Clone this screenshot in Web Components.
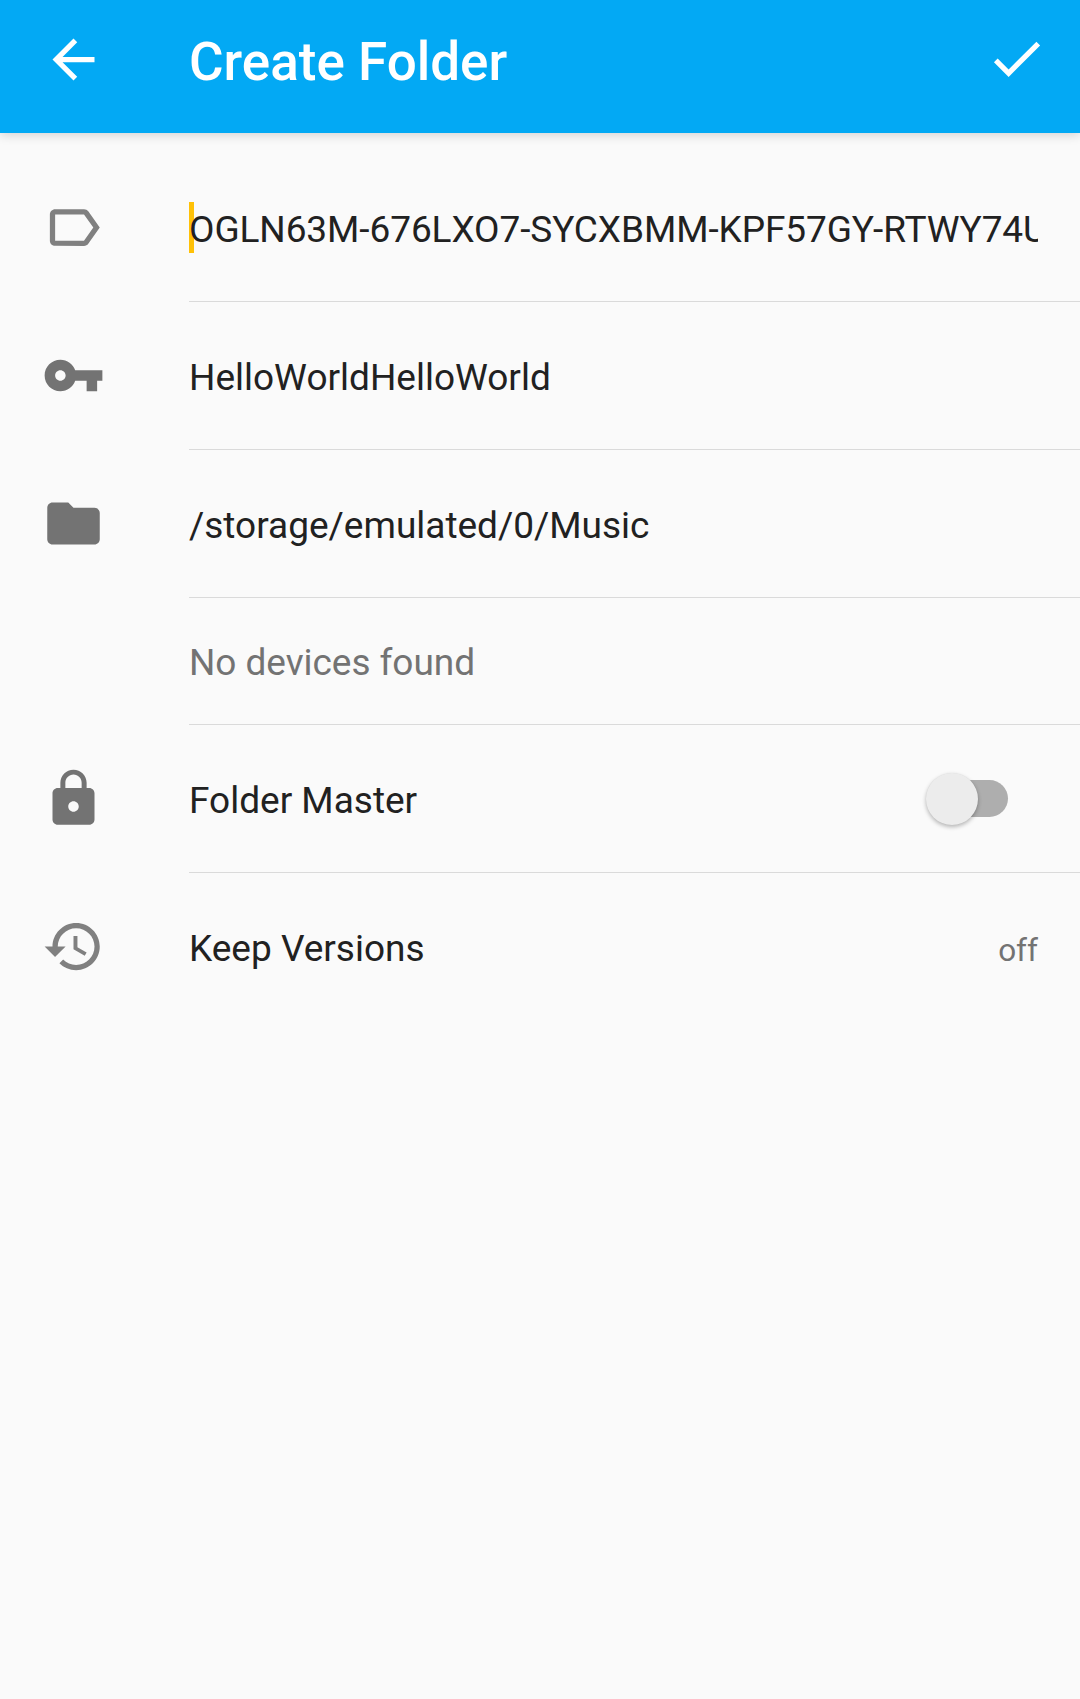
<!DOCTYPE html>
<html lang="en">
<head>
<meta charset="utf-8">
<title>Create Folder</title>
<style>
html, body { margin: 0; background: #fafafa; }
body { font-family: Roboto, sans-serif; color: #212121; }
</style>
</head>
<body>
<folder-screen></folder-screen>
<script>
const ICONS = {
  back: 'M20 11H7.83l5.59-5.59L12 4l-8 8 8 8 1.41-1.41L7.83 13H20v-2z',
  check: 'M9 16.17L4.83 12l-1.42 1.41L9 19 21 7l-1.41-1.41z',
  label: 'M17.63 5.84C17.27 5.33 16.67 5 16 5L5 5.01C3.9 5.01 3 5.9 3 7v10c0 1.1.9 1.99 2 1.99L16 19c.67 0 1.27-.33 1.63-.84L22 12l-4.37-6.16zM16 17H5V7h11l3.55 5L16 17z',
  key: 'M12.65 10C11.83 7.67 9.61 6 7 6c-3.31 0-6 2.69-6 6s2.69 6 6 6c2.61 0 4.83-1.67 5.65-4H17v4h4v-4h2v-4H12.65zM7 14c-1.1 0-2-.9-2-2s.9-2 2-2 2 .9 2 2-.9 2-2 2z',
  folder: 'M10 4H4c-1.1 0-1.99.9-1.99 2L2 18c0 1.1.9 2 2 2h16c1.1 0 2-.9 2-2V8c0-1.1-.9-2-2-2h-8l-2-2z',
  lock: 'M18 8h-1V6c0-2.76-2.24-5-5-5S7 3.24 7 6v2H6c-1.1 0-2 .9-2 2v10c0 1.1.9 2 2 2h12c1.1 0 2-.9 2-2V10c0-1.1-.9-2-2-2zm-6 9c-1.1 0-2-.9-2-2s.9-2 2-2 2 .9 2 2-.9 2-2 2zm3.1-9H8.9V6c0-1.71 1.39-3.1 3.1-3.1 1.71 0 3.1 1.39 3.1 3.1v2z',
  history: 'M13 3c-4.97 0-9 4.03-9 9H1l3.89 3.89.07.14L9 12H6c0-3.87 3.13-7 7-7s7 3.13 7 7-3.13 7-7 7c-1.93 0-3.68-.79-4.94-2.06l-1.42 1.42C8.27 19.99 10.51 21 13 21c4.97 0 9-4.03 9-9s-4.03-9-9-9zm-1 5v5l4.28 2.54.72-1.21-3.5-2.08V8H12z'
};

customElements.define('md-icon', class extends HTMLElement {
  connectedCallback() {
    this.attachShadow({ mode: 'open' }).innerHTML = `
      <style>:host{display:block;width:63px;height:63px;flex:none} svg{display:block;width:63px;height:63px;fill:currentColor}</style>
      <svg viewBox="0 0 24 24" aria-hidden="true"><path d="${ICONS[this.getAttribute('name')]}"/></svg>`;
  }
});

customElements.define('app-bar', class extends HTMLElement {
  connectedCallback() {
    this.attachShadow({ mode: 'open' }).innerHTML = `
      <style>
        :host{display:flex;box-sizing:border-box;height:133px;padding:0 32px 0 42px;background:#03a9f4;color:#fff;box-shadow:0 2px 10px rgba(0,0,0,.16)}
        md-icon{margin-top:28px}
        .end{margin-top:27px}
        h1{flex:1;margin:31px 0 0 84px;font-size:53px;font-weight:500;line-height:62px;white-space:nowrap}
      </style>
      <md-icon name="back"></md-icon>
      <h1><slot></slot></h1>
      <md-icon class="end" name="check"></md-icon>`;
  }
});

customElements.define('form-row', class extends HTMLElement {
  connectedCallback() {
    const icon = this.getAttribute('icon');
    this.attachShadow({ mode: 'open' }).innerHTML = `
      <style>
        :host{display:flex;height:148px;padding-left:42px}
        :host([short]){height:127px;color:#737373}
        .lead{width:147px;flex:none;padding-top:42px;color:#737373}
        .lead.light{color:#808080}
        .body{flex:1;min-width:0;box-sizing:border-box;display:flex;align-items:center;padding-right:42px;border-bottom:1px solid #dadada}
        :host([last]) .body{border-color:transparent}
        .text{flex:1;min-width:0;margin-top:4px;font-size:37px;line-height:51px;white-space:nowrap;overflow:hidden}
        :host([short]) .text{margin-top:3px;letter-spacing:-.05px}
        .text.focused{height:55px;margin-top:0;padding-top:4px;line-height:51px;letter-spacing:-.08px;background:linear-gradient(#ffc107,#ffc107) 0 2px/5px 51px no-repeat}
      </style>
      <div class="lead ${icon === 'label' || icon === 'history' ? 'light' : ''}">${icon ? `<md-icon name="${icon}"></md-icon>` : ''}</div>
      <div class="body"><div class="text ${this.hasAttribute('focused') ? 'focused' : ''}" style="box-sizing:border-box"><slot></slot></div><slot name="end"></slot></div>`;
  }
});

customElements.define('toggle-switch', class extends HTMLElement {
  connectedCallback() {
    this.attachShadow({ mode: 'open' }).innerHTML = `
      <style>
        :host{display:block;margin-right:30px}
        .track{display:flex;align-items:center;width:76px;height:37px;border-radius:19px;background:#aeaeae}
        .thumb{width:52px;height:52px;margin:1px 0 0 -6px;border-radius:50%;background:#ececec;box-shadow:0 2px 4px rgba(0,0,0,.28),0 0 1px rgba(0,0,0,.08)}
      </style>
      <div class="track"><div class="thumb"></div></div>`;
  }
});

customElements.define('value-label', class extends HTMLElement {
  connectedCallback() {
    this.attachShadow({ mode: 'open' }).innerHTML = `
      <style>:host{display:block;margin-top:8px;font-size:31.5px;line-height:37px;color:#737373}</style><slot></slot>`;
  }
});

customElements.define('folder-screen', class extends HTMLElement {
  connectedCallback() {
    this.attachShadow({ mode: 'open' }).innerHTML = `
      <style>
        :host{display:block;height:1699px;overflow:hidden;background:#fafafa}
        main{padding-top:21px}
      </style>
      <app-bar>Create Folder</app-bar>
      <main>
        <form-row icon="label" focused>OGLN63M-676LXO7-SYCXBMM-KPF57GY-RTWY74U</form-row>
        <form-row icon="key">HelloWorldHelloWorld</form-row>
        <form-row icon="folder">/storage/emulated/0/Music</form-row>
        <form-row short>No devices found</form-row>
        <form-row icon="lock">Folder Master<toggle-switch slot="end"></toggle-switch></form-row>
        <form-row icon="history" last>Keep Versions<value-label slot="end">off</value-label></form-row>
      </main>`;
  }
});
</script>
</body>
</html>
